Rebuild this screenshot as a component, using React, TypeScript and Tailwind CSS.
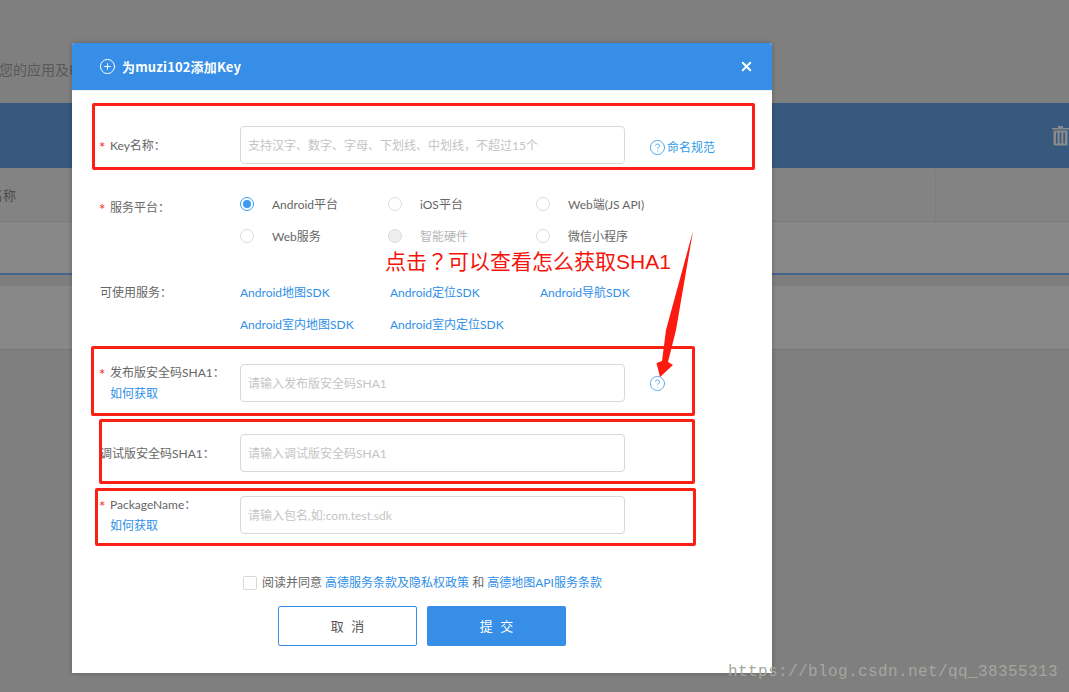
import { CirclePlus, CircleHelp, X } from "lucide-react";

const FONT = "font-['Lato','Noto_Sans_CJK_SC',sans-serif]";

function Star() {
  return <span className="inline-block w-[11px] align-[-3px] text-[15px] leading-[12px] text-[#f5271c]">*</span>;
}

function Radio({ label, checked, disabled }: { label: string; checked?: boolean; disabled?: boolean }) {
  return (
    <div className="flex h-[32px] w-[148px] items-start pt-[9px]">
      <span
        className={
          checked
            ? "flex h-[14px] w-[14px] items-center justify-center rounded-full border border-[#3a9bf0] bg-white"
            : disabled
              ? "h-[14px] w-[14px] rounded-full border border-[#dcdcdc] bg-[#eeeeee]"
              : "h-[14px] w-[14px] rounded-full border border-[#dcdcdc] bg-white"
        }
      >
        {checked && <span className="h-[8px] w-[8px] rounded-full bg-[#3a9bf0]" />}
      </span>
      <span className={disabled ? "ml-[18px] -mt-[1px] text-[#b5b5b5]" : "ml-[18px] -mt-[1px] text-[#666666]"}>{label}</span>
    </div>
  );
}

function Field({ placeholder }: { placeholder: string }) {
  return (
    <div className="flex h-[38px] w-[385px] items-center rounded-[4px] border border-[#d9d9d9] bg-white px-[7px] pt-[1px] text-[#c4c4c4]">
      {placeholder}
    </div>
  );
}

function Svc({ label }: { label: string }) {
  return <div className="flex h-[32px] w-[150px] items-center pt-[2px] text-[#2f8fe8]">{label}</div>;
}

function Box({ className }: { className: string }) {
  return <div className={`absolute rounded-[2px] border-[3px] border-[#fb2015] ${className}`} />;
}

export default function App() {
  return (
    <div className={`relative h-[692px] w-[1069px] overflow-hidden bg-[#7f7f80] text-[12px] ${FONT}`}>
      {/* page behind the overlay */}
      <div className="flex h-[103px] items-start overflow-hidden pt-[59px] text-[14px] text-[#585858]">
        <span className="-ml-[1px] whitespace-nowrap">您的应用及Key</span>
      </div>
      <div className="flex h-[65px] items-center justify-end bg-[#38597e]">
        <svg width="17" height="21" viewBox="0 0 17 21" className="mr-[0px] mt-[-1px]">
          <path d="M0 3h17v1.6H0zM6 1h5v2H6z" fill="#8a8a8a" />
          <path d="M1.5 5.5h14V19a1.5 1.5 0 0 1-1.5 1.5H3A1.5 1.5 0 0 1 1.5 19z" fill="#8a8a8a" />
          <path d="M4 7.5h1.6v11H4zM7.7 7.5h1.6v11H7.7zM11.4 7.5H13v11h-1.6z" fill="#38597e" />
        </svg>
      </div>
      <div className="flex h-[54px] items-center overflow-hidden border-b border-[#7b7b7b] bg-[#838383] pt-[2px] text-[13px] text-[#4c4c4c]">
        <span className="-ml-[10px] w-[945px] shrink-0 whitespace-nowrap">名称</span>
        <span className="h-full w-[1px] bg-[#7d7d7d]" />
      </div>
      <div className="h-[53px] border-b-2 border-[#43648d] bg-[#888888]" />
      <div className="h-[11px] bg-[#7e7e80]" />
      <div className="h-[64px] border-b border-[#777777] bg-[#888888]" />

      {/* dialog */}
      <div className="absolute left-[72px] top-[43px] h-[630px] w-[700px] overflow-hidden rounded-t-[3px] bg-white shadow-[0_0_5px_rgba(0,0,0,0.25)]">
        <div className="flex h-[48px] items-center justify-between border-b border-[#eeeeee] bg-[#378ee6] pl-[27px] pr-[18px] text-white">
          <div className="flex items-center">
            <CirclePlus size={17} strokeWidth={1.4} />
            <span className="ml-[6px] font-['Noto_Sans_CJK_SC',sans-serif] text-[13px] font-bold tracking-[0.15px]">为muzi102添加Key</span>
          </div>
          <X size={15} strokeWidth={3.2} />
        </div>

        <div className="pt-[35px]">
          <div className="flex">
            <div className="flex h-[38px] w-[168px] items-center pl-[27px] pt-[2px] text-[#666666]">
              <span><Star />Key名称：</span>
            </div>
            <Field placeholder="支持汉字、数字、字母、下划线、中划线，不超过15个" />
            <div className="ml-[24px] mt-[13px] flex h-[17px] items-center text-[#2f9bea]">
              <CircleHelp size={17} strokeWidth={1.2} />
              <span className="ml-[1px] pt-[1px]">命名规范</span>
            </div>
          </div>

          <div className="mt-[24px] flex">
            <div className="w-[168px] pl-[27px] pt-[11px] text-[#666666]">
              <Star />服务平台：
            </div>
            <div className="flex w-[444px] flex-wrap">
              <Radio label="Android平台" checked />
              <Radio label="iOS平台" />
              <Radio label="Web端(JS API)" />
              <Radio label="Web服务" />
              <Radio label="智能硬件" disabled />
              <Radio label="微信小程序" />
            </div>
          </div>

          <div className="mt-[24px] flex">
            <div className="flex h-[32px] w-[168px] items-center pl-[28px] pt-[2px] text-[#666666]">可使用服务：</div>
            <div className="flex w-[450px] flex-wrap">
              <Svc label="Android地图SDK" />
              <Svc label="Android定位SDK" />
              <Svc label="Android导航SDK" />
              <Svc label="Android室内地图SDK" />
              <Svc label="Android室内定位SDK" />
            </div>
          </div>

          <div className="mt-[24px] flex">
            <div className="h-[38px] w-[168px] pl-[27px] pt-[0px] text-[#666666]">
              <div className="h-[18px] leading-[18px]"><Star />发布版安全码SHA1：</div>
              <div className="mt-[3px] h-[18px] pl-[11px] leading-[18px] text-[#2f8fe8]">如何获取</div>
            </div>
            <Field placeholder="请输入发布版安全码SHA1" />
            <div className="ml-[24px] mt-[11px] text-[#4a9ee8]">
              <CircleHelp size={17} strokeWidth={1.2} />
            </div>
          </div>

          <div className="mt-[32px] flex">
            <div className="flex h-[38px] w-[168px] items-center pl-[28px] pt-[2px] text-[#666666]">调试版安全码SHA1：</div>
            <Field placeholder="请输入调试版安全码SHA1" />
          </div>

          <div className="mt-[24px] flex">
            <div className="h-[38px] w-[168px] pl-[27px] text-[#666666]">
              <div className="h-[18px] leading-[18px]"><Star />PackageName：</div>
              <div className="mt-[3px] h-[18px] pl-[11px] leading-[18px] text-[#2f8fe8]">如何获取</div>
            </div>
            <Field placeholder="请输入包名,如:com.test.sdk" />
          </div>

          <div className="mt-[38px] flex h-[20px] items-center pl-[171px] text-[#666666]">
            <span className="mt-[2px] h-[14px] w-[14px] rounded-[2px] border border-[#d9d9d9] bg-white" />
            <span className="ml-[5px] whitespace-pre pt-[2px]">
              阅读并同意 <span className="text-[#2f8fe8]">高德服务条款及隐私权政策</span> 和 <span className="text-[#2f8fe8]">高德地图API服务条款</span>
            </span>
          </div>

          <div className="mt-[14px] flex gap-[10px] pl-[206px]">
            <div className="flex h-[40px] w-[139px] items-center justify-center rounded-[2px] border border-[#378ee6] pl-[2px] pt-[2px] text-[13px] tracking-[2px] text-[#555555]">
              取 消
            </div>
            <div className="flex h-[40px] w-[139px] items-center justify-center rounded-[2px] bg-[#378ee6] pl-[2px] pt-[2px] text-[13px] tracking-[2px] text-white">
              提 交
            </div>
          </div>
        </div>
      </div>

      {/* screenshot annotations */}
      <Box className="left-[92px] top-[103px] h-[67px] w-[663px]" />
      <Box className="left-[91px] top-[346px] h-[70px] w-[604px]" />
      <Box className="left-[99px] top-[419px] h-[65px] w-[596px]" />
      <Box className="left-[95px] top-[488px] h-[58px] w-[601px]" />
      <div className="absolute left-[385px] top-[244px] whitespace-nowrap font-['Liberation_Sans','Noto_Sans_CJK_SC',sans-serif] text-[21px] leading-[32px] text-[#f5140c]">
        点击<span className="font-['Noto_Sans_CJK_TC',sans-serif]">？</span>可以查看怎么获取SHA1
      </div>
      <svg className="absolute left-[650px] top-[228px]" width="50" height="155" viewBox="0 0 50 155">
        <path d="M43 3 L26 102 L18 134 L23 137 L10 149 L6.5 135 L12 133 L16 102 Z" fill="#fb1a10" />
      </svg>
      <div className="absolute left-[728px] top-[662px] whitespace-nowrap font-['Liberation_Mono',monospace] text-[16px] leading-[20px] tracking-[0.4px] text-[#a6a69f]">
        https://blog.csdn.net/qq_38355313
      </div>
    </div>
  );
}
